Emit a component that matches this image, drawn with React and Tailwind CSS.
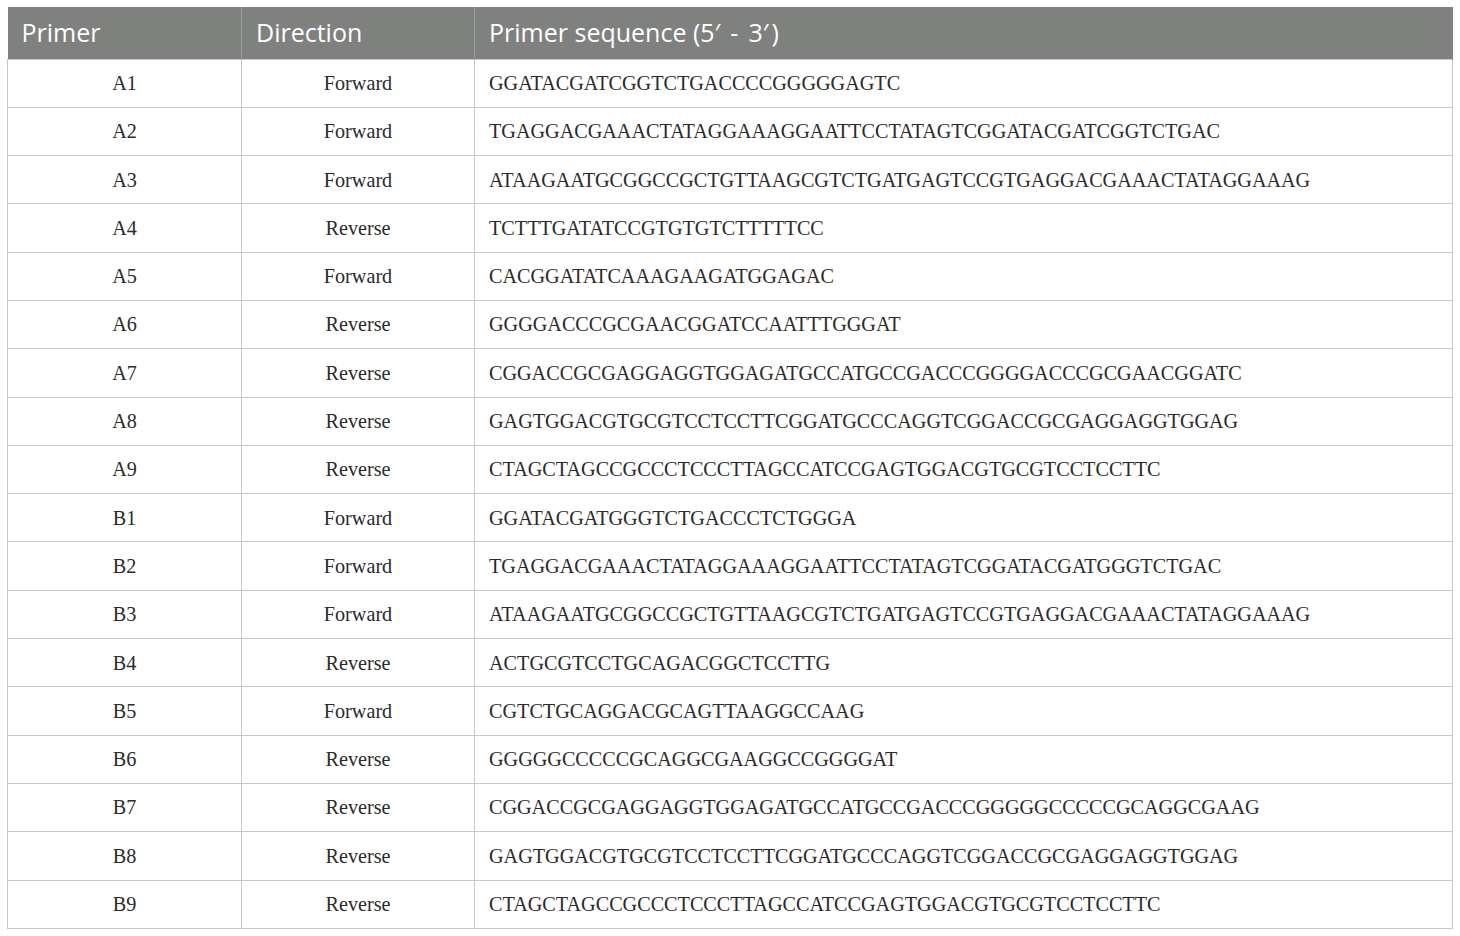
import React from 'react'

const rows = [
  ['A1', 'Forward', 'GGATACGATCGGTCTGACCCCGGGGGAGTC'],
  ['A2', 'Forward', 'TGAGGACGAAACTATAGGAAAGGAATTCCTATAGTCGGATACGATCGGTCTGAC'],
  ['A3', 'Forward', 'ATAAGAATGCGGCCGCTGTTAAGCGTCTGATGAGTCCGTGAGGACGAAACTATAGGAAAG'],
  ['A4', 'Reverse', 'TCTTTGATATCCGTGTGTCTTTTTCC'],
  ['A5', 'Forward', 'CACGGATATCAAAGAAGATGGAGAC'],
  ['A6', 'Reverse', 'GGGGACCCGCGAACGGATCCAATTTGGGAT'],
  ['A7', 'Reverse', 'CGGACCGCGAGGAGGTGGAGATGCCATGCCGACCCGGGGACCCGCGAACGGATC'],
  ['A8', 'Reverse', 'GAGTGGACGTGCGTCCTCCTTCGGATGCCCAGGTCGGACCGCGAGGAGGTGGAG'],
  ['A9', 'Reverse', 'CTAGCTAGCCGCCCTCCCTTAGCCATCCGAGTGGACGTGCGTCCTCCTTC'],
  ['B1', 'Forward', 'GGATACGATGGGTCTGACCCTCTGGGA'],
  ['B2', 'Forward', 'TGAGGACGAAACTATAGGAAAGGAATTCCTATAGTCGGATACGATGGGTCTGAC'],
  ['B3', 'Forward', 'ATAAGAATGCGGCCGCTGTTAAGCGTCTGATGAGTCCGTGAGGACGAAACTATAGGAAAG'],
  ['B4', 'Reverse', 'ACTGCGTCCTGCAGACGGCTCCTTG'],
  ['B5', 'Forward', 'CGTCTGCAGGACGCAGTTAAGGCCAAG'],
  ['B6', 'Reverse', 'GGGGGCCCCCGCAGGCGAAGGCCGGGGAT'],
  ['B7', 'Reverse', 'CGGACCGCGAGGAGGTGGAGATGCCATGCCGACCCGGGGGCCCCCGCAGGCGAAG'],
  ['B8', 'Reverse', 'GAGTGGACGTGCGTCCTCCTTCGGATGCCCAGGTCGGACCGCGAGGAGGTGGAG'],
  ['B9', 'Reverse', 'CTAGCTAGCCGCCCTCCCTTAGCCATCCGAGTGGACGTGCGTCCTCCTTC'],
]

export default function App() {
  return (
    <div className="min-h-screen bg-white pt-[7px] pl-[7px]">
      <table className="w-[1446px] border-collapse table-fixed">
        <colgroup>
          <col className="w-[234px]" />
          <col className="w-[233px]" />
          <col />
        </colgroup>
        <thead>
          <tr className="h-[52px] bg-[#7f817f] text-white font-['Open_Sans',sans-serif] text-[25px]">
            <th className="text-left font-normal pl-[14px] border-r border-[#9a9c9a]">Primer</th>
            <th className="text-left font-normal pl-[14px] border-r border-[#9a9c9a]">Direction</th>
            <th className="text-left font-normal pl-[14px] border-r border-[#7f817f]">
              Primer sequence (5′<span className="mx-[10px]">-</span>3′<span className="ml-[3px]">)</span>
            </th>
          </tr>
        </thead>
        <tbody className="font-['Liberation_Serif',serif] text-[20.2px] text-[#2b2b2b]">
          {rows.map(([id, dir, seq]) => (
            <tr key={id} className="h-[48.3px]">
              <td className="border border-[#c8c8c8] text-center">{id}</td>
              <td className="border border-[#c8c8c8] text-center">{dir}</td>
              <td className="border border-[#c8c8c8] pl-[14px]">{seq}</td>
            </tr>
          ))}
        </tbody>
      </table>
    </div>
  )
}
